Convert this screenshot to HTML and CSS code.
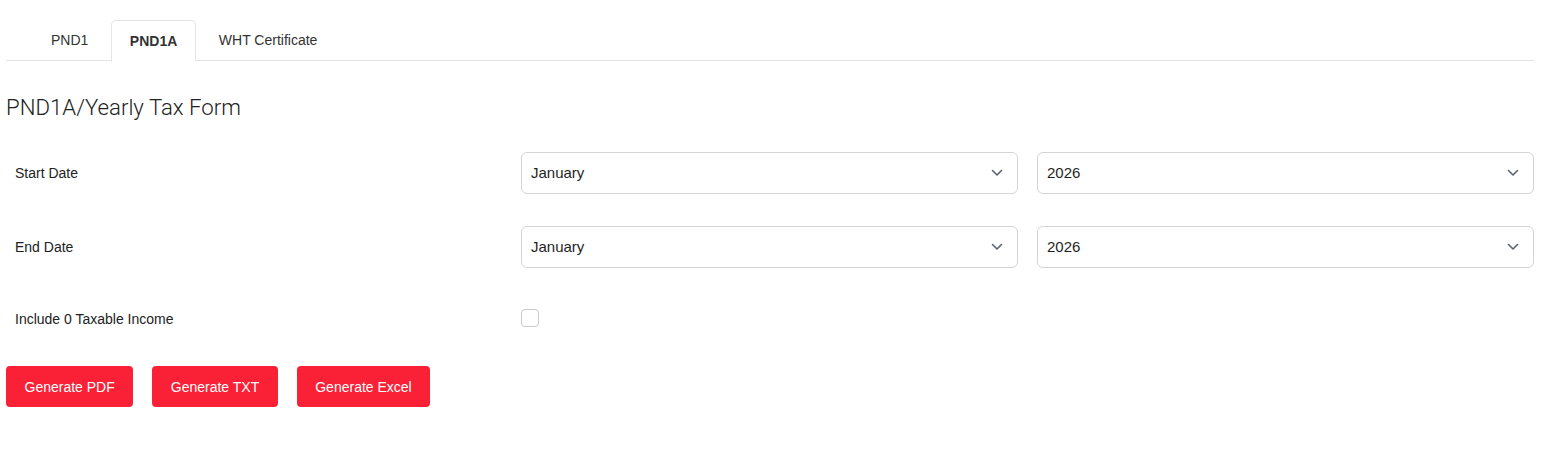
FILE: index.html
```html
<!DOCTYPE html>
<html lang="en">
<head>
<meta charset="utf-8">
<title>PND1A</title>
<link rel="stylesheet" href="styles.css">
</head>
<body>
<div class="page">
  <ul class="tabs">
    <li class="tab">PND1</li>
    <li class="tab active">PND1A</li>
    <li class="tab">WHT Certificate</li>
  </ul>

  <h1 class="title">PND1A/Yearly Tax Form</h1>

  <div class="form">
    <div class="row">
      <label class="label">Start Date</label>
      <div class="select"><span>January</span>
        <svg class="chev" viewBox="0 0 12 8" width="12" height="8"><path d="M1.5 1.5 L6 6 L10.5 1.5" fill="none" stroke="#5b6270" stroke-width="1.6" stroke-linecap="round" stroke-linejoin="round"/></svg>
      </div>
      <div class="select"><span>2026</span>
        <svg class="chev" viewBox="0 0 12 8" width="12" height="8"><path d="M1.5 1.5 L6 6 L10.5 1.5" fill="none" stroke="#5b6270" stroke-width="1.6" stroke-linecap="round" stroke-linejoin="round"/></svg>
      </div>
    </div>
    <div class="row">
      <label class="label">End Date</label>
      <div class="select"><span>January</span>
        <svg class="chev" viewBox="0 0 12 8" width="12" height="8"><path d="M1.5 1.5 L6 6 L10.5 1.5" fill="none" stroke="#5b6270" stroke-width="1.6" stroke-linecap="round" stroke-linejoin="round"/></svg>
      </div>
      <div class="select"><span>2026</span>
        <svg class="chev" viewBox="0 0 12 8" width="12" height="8"><path d="M1.5 1.5 L6 6 L10.5 1.5" fill="none" stroke="#5b6270" stroke-width="1.6" stroke-linecap="round" stroke-linejoin="round"/></svg>
      </div>
    </div>
    <div class="row row-check">
      <label class="label">Include 0 Taxable Income</label>
      <div class="check-cell"><span class="checkbox"></span></div>
    </div>
  </div>

  <div class="actions">
    <button class="btn">Generate PDF</button>
    <button class="btn">Generate TXT</button>
    <button class="btn">Generate Excel</button>
  </div>
</div>
</body>
</html>
```

FILE: styles.css
```css
* { box-sizing: border-box; }
html, body { margin: 0; padding: 0; background: #fff; }
body {
  font-family: "Liberation Sans", Arial, sans-serif;
  color: #222;
  font-size: 14px;
}
.page {
  padding: 20px 22px 0 6px;
}
.tabs {
  list-style: none;
  margin: 0;
  padding: 0 0 0 26px;
  display: flex;
  gap: 4px;
  border-bottom: 1px solid #e4e4e7;
  height: 41px;
}
.tab {
  height: 41px;
  padding: 0 18px 2px 18px;
  display: flex;
  align-items: center;
  font-size: 14px;
  color: #333;
  border: 1px solid transparent;
  border-radius: 5px 5px 0 0;
}
.tab.active {
  font-weight: bold;
  color: #333;
  background: #fff;
  border-color: #e4e4e7;
  border-bottom-color: #fff;
  margin-bottom: -1px;
  height: 42px;
  padding: 0 17.5px 1px 17.5px;
}
.title {
  margin: 33px 0 0 0;
  font-family: Roboto, "Liberation Sans", sans-serif;
  font-weight: 300;
  font-size: 22.2px;
  line-height: 26px;
  color: #222;
}
.form {
  margin-top: 32px;
  display: flex;
  flex-direction: column;
  gap: 32px;
}
.row {
  display: grid;
  grid-template-columns: 1fr 1fr 1fr;
  column-gap: 20px;
  align-items: center;
  height: 42px;
}
.row-check { height: 38px; }
.label {
  padding-left: 9px;
  font-size: 14px;
  color: #222;
}
.select {
  height: 42px;
  border: 1px solid #d4d4d8;
  border-radius: 6px;
  display: flex;
  align-items: center;
  justify-content: space-between;
  padding: 0 14px 1px 9px;
  margin-left: -1px;
  font-size: 15px;
  color: #1f1f1f;
}
.chev { display: block; }
.check-cell { display: flex; align-items: center; margin-top: -3px; margin-left: -1px; }
.checkbox {
  width: 18px;
  height: 18px;
  border: 1px solid #c9c9ce;
  border-radius: 4px;
  background: #fff;
}
.actions {
  margin-top: 28px;
  display: flex;
  gap: 19px;
}
.btn {
  height: 41px;
  padding: 0 18.5px;
  border: none;
  border-radius: 4px;
  background: #fa2036;
  color: #fff;
  font-family: "Liberation Sans", Arial, sans-serif;
  font-size: 14px;
}
```
